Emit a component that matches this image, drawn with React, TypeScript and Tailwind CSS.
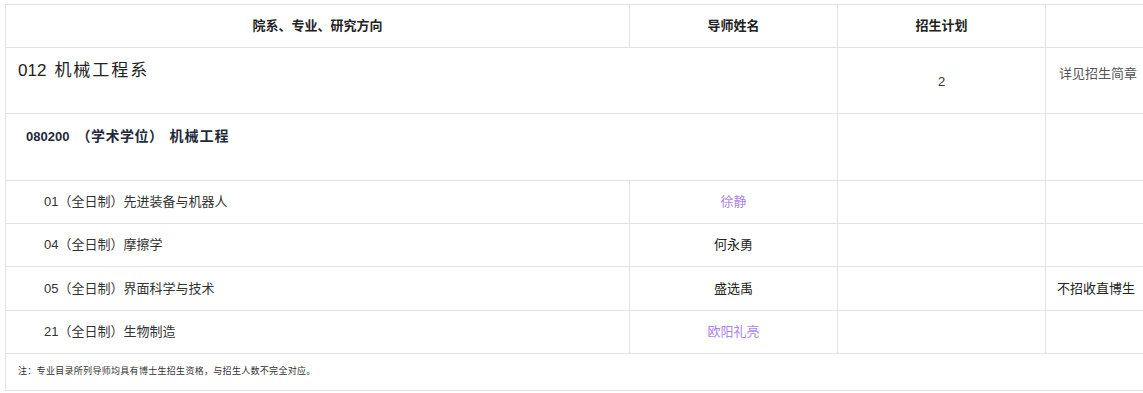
import React from "react";

const font = { fontFamily: '"Liberation Sans", "Noto Sans CJK SC", sans-serif' };

export default function App() {
  const b = "border border-[#e1e3e9]";
  return (
    <div className="w-[1143px] h-[393px] overflow-hidden bg-white" style={font}>
      <div className="pl-[5px] pt-[4px]">
        <table className="table-fixed border-collapse w-[1249px] text-[#333]">
          <colgroup>
            <col className="w-[624px]" />
            <col className="w-[208px]" />
            <col className="w-[208px]" />
            <col className="w-[209px]" />
          </colgroup>
          <tbody>
            <tr className="h-[43px]">
              <td className={`${b} text-center text-[13px] font-bold text-[#222]`}>
                院系、专业、研究方向
              </td>
              <td className={`${b} text-center text-[13px] font-bold text-[#222]`}>导师姓名</td>
              <td className={`${b} text-center text-[13px] font-bold text-[#222]`}>招生计划</td>
              <td className={`${b}`} />
            </tr>
            <tr className="h-[66px]">
              <td colSpan={2} className={`${b} align-top pl-[12px] pt-[10px] text-[17px] text-[#222]`}>
                <span>012</span>
                <span className="ml-[8px] tracking-[2px]">机械工程系</span>
              </td>
              <td className={`${b} text-center text-[13px] pt-[2px]`}>2</td>
              <td className={`${b} align-top pl-[13px] pt-[16px] text-[13px] text-[#555] whitespace-nowrap`}>
                详见招生简章
              </td>
            </tr>
            <tr className="h-[67px]">
              <td colSpan={2} className={`${b} align-top pl-[20px] pt-[12px] text-[13px] font-bold text-[#1f2a3a]`}>
                <span>080200</span>
                <span className="ml-[7px] text-[14px] tracking-[0.5px]">（学术学位）</span>
                <span className="ml-[6px] text-[14px] tracking-[1px]">机械工程</span>
              </td>
              <td className={b} />
              <td className={b} />
            </tr>
            {[
              ["01（全日制）先进装备与机器人", "徐静", true, ""],
              ["04（全日制）摩擦学", "何永勇", false, ""],
              ["05（全日制）界面科学与技术", "盛选禹", false, "不招收直博生"],
              ["21（全日制）生物制造", "欧阳礼亮", true, ""],
            ].map(([dir, name, purple, remark], i) => (
              <tr key={i} className={i === 2 ? "h-[44px]" : "h-[43px]"}>
                <td className={`${b} pl-[38px] text-[13px] text-[#333]`}>{dir as string}</td>
                <td
                  className={`${b} text-center text-[13px] ${purple ? "text-[#ac82f2]" : "text-[#222]"}`}
                >
                  {name as string}
                </td>
                <td className={b} />
                <td className={`${b} pl-[11px] text-[13px] text-[#222] whitespace-nowrap`}>
                  {remark as string}
                </td>
              </tr>
            ))}
            <tr className="h-[37px]">
              <td colSpan={4} className={`${b} pl-[12px] text-[9px] tracking-[0.3px] text-[#333]`}>
                注：专业目录所列导师均具有博士生招生资格，与招生人数不完全对应。
              </td>
            </tr>
          </tbody>
        </table>
      </div>
    </div>
  );
}
